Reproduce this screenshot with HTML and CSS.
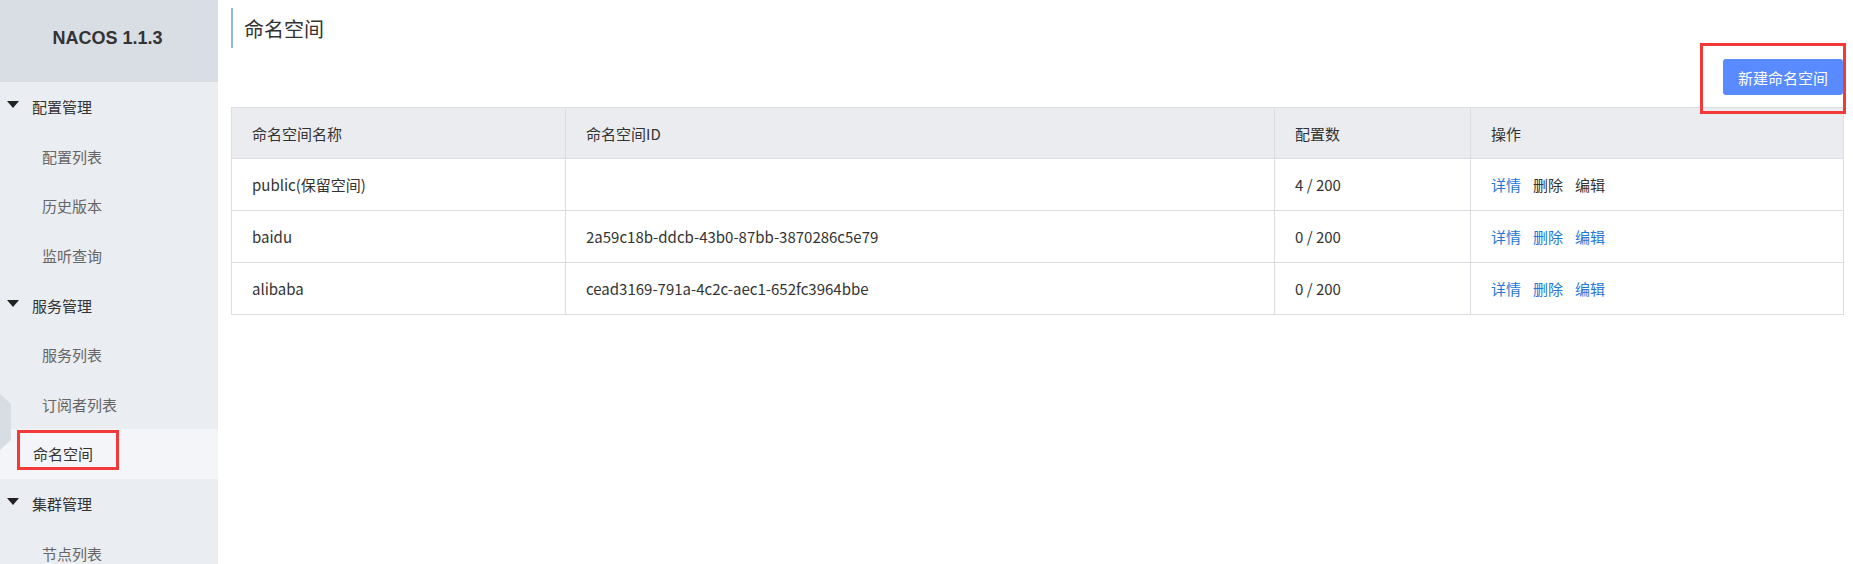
FILE: index.html
```html
<!DOCTYPE html>
<html lang="zh-CN">
<head>
<meta charset="utf-8">
<title>Nacos</title>
<link rel="stylesheet" href="styles.css">
</head>
<body>
<div class="app">
  <aside class="sidebar">
    <div class="brand">NACOS 1.1.3</div>
    <div class="menu">
      <div class="group"><span class="tri"></span>配置管理</div>
      <div class="item">配置列表</div>
      <div class="item">历史版本</div>
      <div class="item">监听查询</div>
      <div class="group"><span class="tri"></span>服务管理</div>
      <div class="item">服务列表</div>
      <div class="item">订阅者列表</div>
      <div class="item active">命名空间<span class="mark mark-side"></span></div>
      <div class="group"><span class="tri"></span>集群管理</div>
      <div class="item">节点列表</div>
    </div>
    <div class="handle"></div>
  </aside>
  <main class="main">
    <div class="title">命名空间</div>
    <div class="toolbar">
      <div class="btn-wrap">
        <button class="btn">新建命名空间</button>
        <span class="mark mark-btn"></span>
      </div>
    </div>
    <table class="grid">
      <colgroup>
        <col class="c1"><col class="c2"><col class="c3"><col class="c4">
      </colgroup>
      <thead>
        <tr><th>命名空间名称</th><th>命名空间ID</th><th>配置数</th><th>操作</th></tr>
      </thead>
      <tbody>
        <tr>
          <td>public(保留空间)</td><td></td><td>4 / 200</td>
          <td><a class="link">详情</a><a class="link dim">删除</a><a class="link dim">编辑</a></td>
        </tr>
        <tr>
          <td>baidu</td><td>2a59c18b-ddcb-43b0-87bb-3870286c5e79</td><td>0 / 200</td>
          <td><a class="link">详情</a><a class="link">删除</a><a class="link">编辑</a></td>
        </tr>
        <tr>
          <td>alibaba</td><td>cead3169-791a-4c2c-aec1-652fc3964bbe</td><td>0 / 200</td>
          <td><a class="link">详情</a><a class="link">删除</a><a class="link">编辑</a></td>
        </tr>
      </tbody>
    </table>
  </main>
</div>
</body>
</html>
```
FILE: styles.css
```css
* { box-sizing: border-box; }
html, body { margin: 0; padding: 0; }
body {
  font-family: "Noto Sans CJK SC", "Noto Sans", sans-serif;
  color: #333;
  background: #fff;
  width: 1853px;
  height: 564px;
  overflow: hidden;
}
.app { display: flex; height: 564px; }
.sidebar {
  position: relative;
  width: 218px;
  flex: none;
  background: #eaedf1;
  height: 564px;
  overflow: hidden;
}
.brand {
  height: 82px;
  background: #d9dde4;
  display: flex;
  align-items: center;
  justify-content: center;
  font-family: "Liberation Sans", Arial, sans-serif;
  font-weight: bold;
  font-size: 18px;
  color: #333;
  padding-bottom: 6px;
  padding-right: 3px;
}
.menu { display: flex; flex-direction: column; }
.group, .item {
  position: relative;
  height: 49.6px;
  display: flex;
  align-items: center;
  font-size: 15px;
}
.group { padding-left: 7px; color: #333; }
.tri {
  width: 0; height: 0;
  border-left: 6.5px solid transparent;
  border-right: 6.5px solid transparent;
  border-top: 7px solid #222;
  margin-right: 13px;
  margin-top: -4px;
}
.item { padding-left: 42px; color: #666; }
.item.active { padding-left: 33px; color: #333; background: #f4f5f8; }
.mark { position: absolute; border: 3px solid #f23a3a; pointer-events: none; }
.mark-side { left: 17px; top: 1px; width: 102px; height: 40px; }
.handle {
  position: absolute;
  left: 0;
  top: 394px;
  width: 11px;
  height: 56px;
  background: #d8dce3;
  clip-path: polygon(0 0, 100% 18%, 100% 82%, 0 100%);
}
.main {
  flex: 1;
  padding: 8px 10px 0 13px;
  min-width: 0;
}
.title {
  height: 40px;
  border-left: 2px solid #8cbbe6;
  padding-left: 11px;
  font-size: 20px;
  display: flex;
  align-items: center;
  color: #333;
}
.toolbar { display: flex; justify-content: flex-end; margin-top: 11px; }
.btn-wrap { position: relative; }
.btn {
  width: 120px;
  height: 36px;
  border: 0;
  border-radius: 3px;
  background: #598aff;
  color: #fff;
  font-family: "Noto Sans CJK SC", sans-serif;
  font-size: 15px;
  padding: 0;
  display: block;
}
.mark-btn { left: -23px; top: -16px; right: -3px; bottom: -19px; }
.grid {
  width: 100%;
  margin-top: 12px;
  border-collapse: collapse;
  table-layout: fixed;
  font-size: 15px;
  color: #333;
}
.c1 { width: 334px; }
.c2 { width: 709px; }
.c3 { width: 196px; }
.c4 { width: 373px; }
.grid th, .grid td {
  border: 1px solid #dcdee3;
  text-align: left;
  padding: 0 20px;
  font-weight: normal;
}
.grid th { height: 51px; background: #ebecf0; }
.grid td { height: 52px; }
.link { color: #2277d8; margin-right: 12px; cursor: pointer; }
.link.dim { color: #333; }
```
